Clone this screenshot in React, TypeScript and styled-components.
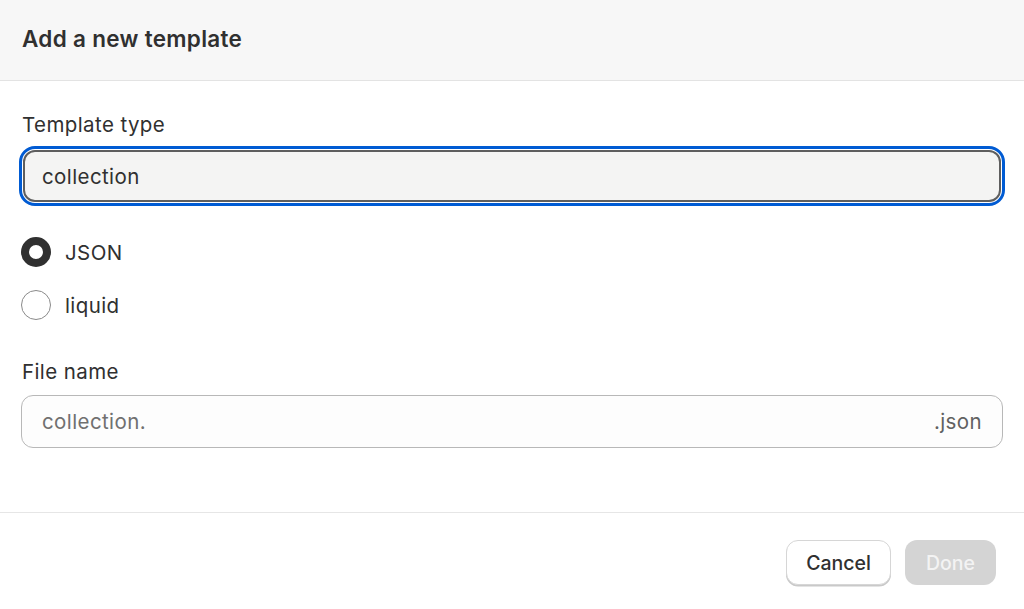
import React from "react";
import styled, { createGlobalStyle } from "styled-components";

const Global = createGlobalStyle`
  html, body { margin: 0; padding: 0; background: #ffffff; }
  body { font-family: Inter, "Noto Sans", "Liberation Sans", sans-serif; color: #303030; }
  * { box-sizing: border-box; }
`;

const Dialog = styled.div`
  width: 1024px;
  height: 609px;
  display: flex;
  flex-direction: column;
  background: #ffffff;
  overflow: hidden;
`;

const Header = styled.header`
  height: 81px;
  flex: none;
  display: flex;
  align-items: center;
  padding: 0 22px 4px;
  background: #f7f7f7;
  border-bottom: 1px solid #e3e3e3;
`;

const Title = styled.h2`
  margin: 0;
  font-size: 22.5px;
  font-weight: 600;
  letter-spacing: 0.3px;
  color: #303030;
`;

const Body = styled.div`
  flex: 1;
  display: flex;
  flex-direction: column;
  padding: 30px 21px 0;
`;

const Label = styled.label<{ $gap: number; $top?: number }>`
  display: block;
  font-size: 20.5px;
  letter-spacing: 0.4px;
  line-height: 28px;
  color: #303030;
  margin-top: ${(p) => p.$top ?? 0}px;
  margin-bottom: ${(p) => p.$gap}px;
  padding-left: 1px;
`;

const Field = styled.div<{ $focused?: boolean }>`
  height: ${(p) => (p.$focused ? 52 : 53)}px;
  display: flex;
  align-items: center;
  justify-content: space-between;
  padding: 0 ${(p) => (p.$focused ? 17 : 20)}px;
  border-radius: 12px;
  font-size: 20.5px;
  letter-spacing: 0.4px;
  background: ${(p) => (p.$focused ? "#f4f4f3" : "#fdfdfd")};
  border: ${(p) => (p.$focused ? "2px solid #5e5e5e" : "1px solid #b8b8b8")};
  outline: ${(p) => (p.$focused ? "3px solid #005bd3" : "none")};
  outline-offset: 1px;
  margin: ${(p) => (p.$focused ? "0 2px" : "0")};
`;

const Value = styled.span`
  color: #303030;
`;

const Placeholder = styled.span`
  color: #707070;
`;

const Suffix = styled.span`
  color: #616161;
`;

const RadioGroup = styled.div`
  display: flex;
  flex-direction: column;
  gap: 23px;
  margin-top: 35px;
`;

const RadioRow = styled.div`
  display: flex;
  align-items: center;
  gap: 14px;
  height: 30px;
  font-size: 20.5px;
  letter-spacing: 0.4px;
  color: #303030;
`;

const Circle = styled.span<{ $checked?: boolean }>`
  width: 30px;
  height: 30px;
  flex: none;
  border-radius: 50%;
  background: #ffffff;
  border: ${(p) => (p.$checked ? "8.5px solid #303030" : "1.5px solid #8a8a8a")};
`;

const Footer = styled.footer`
  height: 97px;
  flex: none;
  display: flex;
  justify-content: flex-end;
  align-items: flex-start;
  gap: 14px;
  padding: 27px 28px 0 0;
  border-top: 1px solid #e6e6e6;
`;

const Button = styled.button<{ $primary?: boolean }>`
  height: 45px;
  padding: 0 ${(p) => (p.$primary ? 21 : 19)}px;
  border-radius: 12px;
  font-family: inherit;
  font-size: 19.5px;
  font-weight: 500;
  cursor: pointer;
  background: ${(p) => (p.$primary ? "#d4d4d4" : "#ffffff")};
  color: ${(p) => (p.$primary ? "#f3f3f3" : "#303030")};
  border: ${(p) => (p.$primary ? "none" : "1px solid #d6d6d6")};
  box-shadow: ${(p) => (p.$primary ? "none" : "0 1.5px 0 #c9c9c9")};
`;

export default function App() {
  return (
    <>
      <Global />
      <Dialog>
        <Header>
          <Title>Add a new template</Title>
        </Header>
        <Body>
          <Label $gap={11}>Template type</Label>
          <Field $focused>
            <Value>collection</Value>
          </Field>
          <RadioGroup>
            <RadioRow>
              <Circle $checked />
              JSON
            </RadioRow>
            <RadioRow>
              <Circle />
              liquid
            </RadioRow>
          </RadioGroup>
          <Label $top={38} $gap={9}>File name</Label>
          <Field>
            <Placeholder>collection.</Placeholder>
            <Suffix>.json</Suffix>
          </Field>
        </Body>
        <Footer>
          <Button>Cancel</Button>
          <Button $primary>Done</Button>
        </Footer>
      </Dialog>
    </>
  );
}
